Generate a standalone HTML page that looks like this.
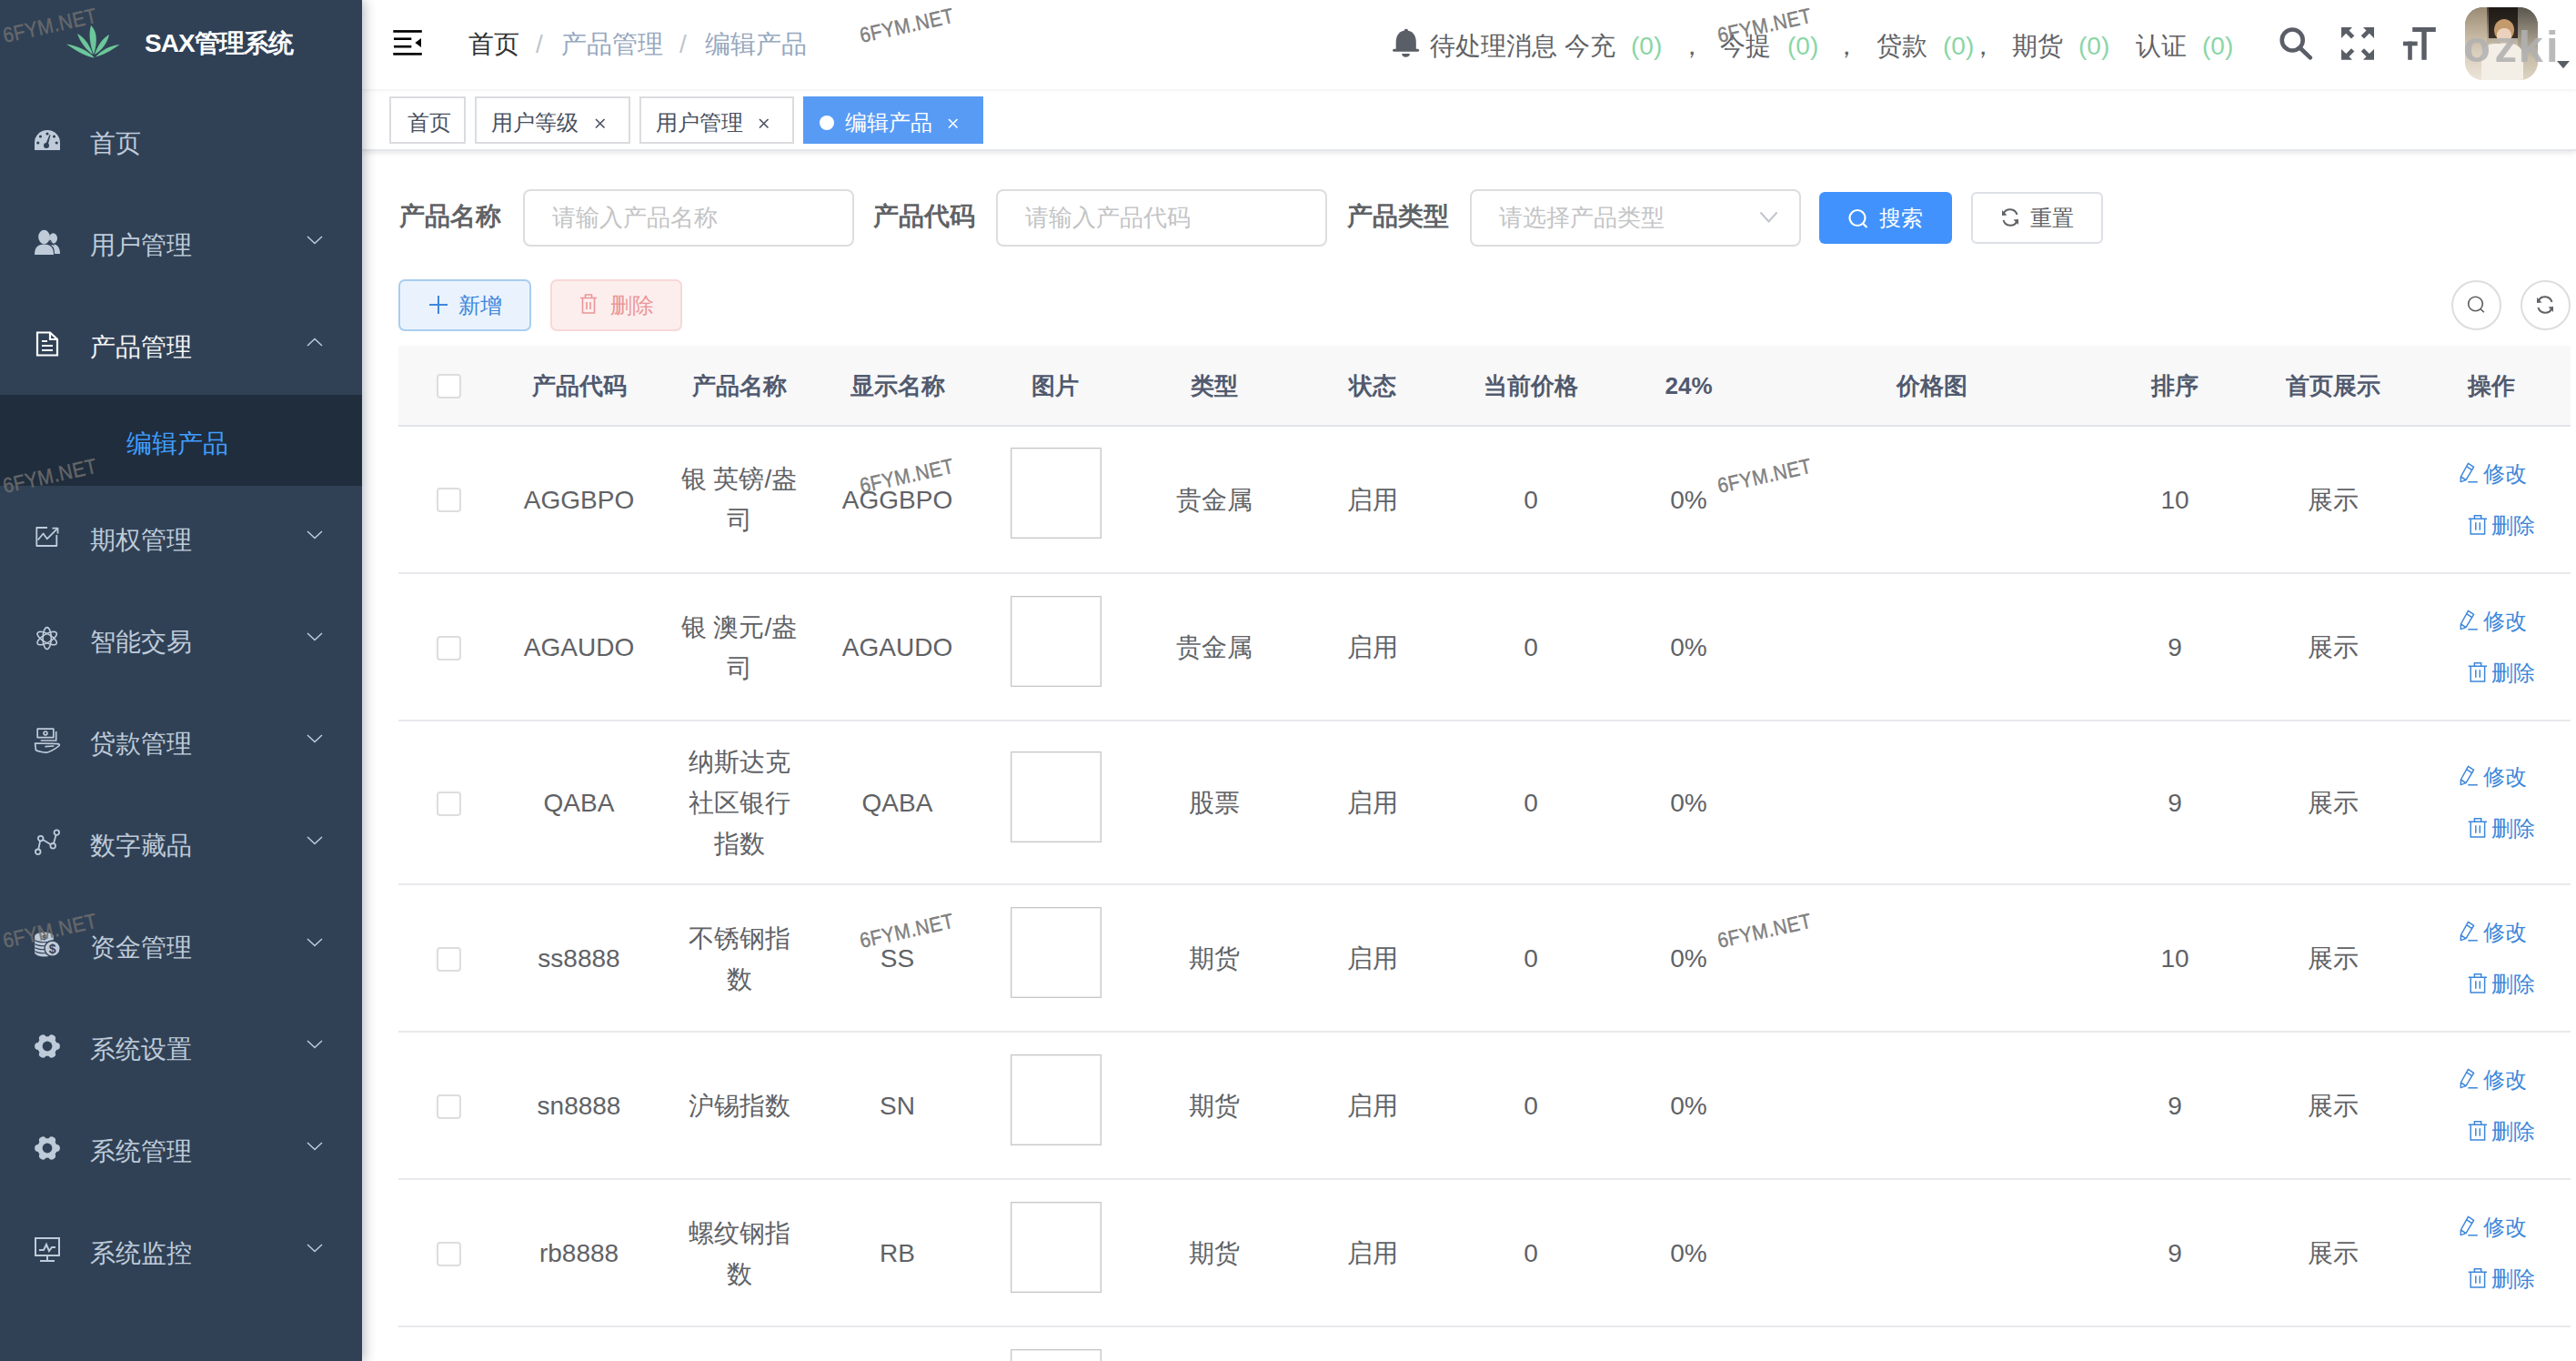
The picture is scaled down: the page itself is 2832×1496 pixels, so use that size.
<!DOCTYPE html><html><head><meta charset="utf-8"><title>SAX</title><style>
*{box-sizing:border-box;margin:0;padding:0}
html,body{width:2832px;height:1496px;overflow:hidden;background:#fff;font-family:"Liberation Sans",sans-serif;position:relative}
.a{position:absolute}
.t{position:absolute;white-space:nowrap;z-index:10}
svg{position:absolute;overflow:visible;z-index:10}
#sb{left:0;top:0;width:398px;height:1496px;background:#304156;box-shadow:3px 0 12px rgba(0,21,41,.28);z-index:5}
.mi{position:absolute;left:0;width:398px;height:112px}
.mt{position:absolute;left:99px;font-size:28px;color:#bfcbd9;line-height:40px;height:40px}
.chev{position:absolute;left:337px;width:18px;height:10px}
#nav{left:398px;top:0;width:2434px;height:98px;background:#fff;box-shadow:0 1px 4px rgba(0,21,41,.08);z-index:3}
#tags{left:398px;top:98px;width:2434px;height:68px;background:#fff;border-bottom:2px solid #e4e6ea;box-shadow:0 2px 6px 0 rgba(0,0,0,.09),0 0 6px 0 rgba(0,0,0,.03);z-index:2}
.tag{position:absolute;top:106px;height:52px;border:2px solid #dadcdf;background:#fff;color:#495060;font-size:24px;line-height:48px;z-index:4}
.lbl{position:absolute;top:218px;font-size:28px;font-weight:bold;color:#606266;line-height:40px}
.inp{position:absolute;top:207.5px;width:364px;height:63px;border:2px solid #dcdddf;border-radius:8px;background:#fff}
.ph{position:absolute;left:30px;top:0;line-height:59px;font-size:26px;color:#c3c4c6;white-space:nowrap}
.th{position:absolute;top:380px;height:88px;line-height:88px;font-size:26px;font-weight:bold;color:#515a6e;text-align:center}
.td{position:absolute;font-size:28px;color:#606266;text-align:center;line-height:45px}
.wm{position:absolute;font-size:23px;color:rgba(110,110,110,.85);-webkit-text-stroke:.5px rgba(110,110,110,.85);white-space:nowrap;transform-origin:0 100%;transform:rotate(-12.5deg) scaleX(.895);line-height:23px;z-index:50;font-weight:normal;letter-spacing:.5px}
</style></head><body>
<div id="sb" class="a">
<svg style="left:60px;top:20px" width="80" height="50" viewBox="60 20 80 50">
<g fill="#6cc79a">
<path d="M73,48.5 C85,50 97,56 104,63.5 C96,63 84,56 73,48.5Z"/>
<path d="M85,37 C93,41 99,50 102,60 C95,55 88,46 85,37Z"/>
<path d="M100,28 C106,33 108,45 103,60 C99,50 97,37 100,28Z"/>
<path d="M120,38 C118,48 111,56 104,60 C107,50 113,42 120,38Z"/>
<path d="M131.5,49 C122,56 112,61 105,62.5 C112,55 121,50 131.5,49Z"/>
</g></svg>
<div class="t" style="left:159px;top:28px;font-size:28px;font-weight:bold;color:#fff;line-height:40px;letter-spacing:-1px">SAX管理系统</div>
<div class="mi" style="top:98px">
</div>
<svg style="left:38px;top:140px" width="28" height="28" viewBox="0 0 28 28"><path fill="#bfcbd9" d="M14,3 A14,14 0 0 1 28,17 L28,25 L0,25 L0,17 A14,14 0 0 1 14,3Z"/><g fill="#304156"><circle cx="14" cy="7" r="1.6"/><circle cx="6.5" cy="10" r="1.6"/><circle cx="21.5" cy="10" r="1.6"/><circle cx="3.8" cy="17" r="1.6"/><circle cx="24.2" cy="17" r="1.6"/><circle cx="13" cy="20" r="3"/><path d="M12,19 L16.5,8 L17.5,8.4 L14.5,20Z"/></g></svg>
<div class="mt" style="top:137.5px;color:#bfcbd9">首页</div>
<div class="mi" style="top:210px">
</div>
<svg style="left:38px;top:252px" width="28" height="28" viewBox="0 0 28 28"><g fill="#bfcbd9"><ellipse cx="20.5" cy="10" rx="4.5" ry="5.8"/><path d="M21,16.5 C26,17 28,21 28,27 L22,27 C22,22 21,19 18,17.5Z"/><ellipse cx="10.5" cy="8.5" rx="6.3" ry="7.8"/><path d="M0,28 C0,20 3.5,16.5 10.5,16.5 C17.5,16.5 21,20 21,28Z"/></g><path d="M17.2,12 C19,16 20,17 21.5,17.5" fill="none" stroke="#304156" stroke-width="1.2"/></svg>
<div class="mt" style="top:249.5px;color:#bfcbd9">用户管理</div>
<svg style="left:337px;top:259px" width="18" height="10" viewBox="0 0 18 10"><path d="M1,1 L9,8.5 L17,1" fill="none" stroke="#bfcbd9" stroke-width="1.5"/></svg>
<div class="mi" style="top:322px">
</div>
<svg style="left:38px;top:364px" width="28" height="28" viewBox="0 0 28 28"><g fill="none" stroke="#fff" stroke-width="2.2"><path d="M3,1.5 L17,1.5 L25,9 L25,26.5 L3,26.5Z"/><path d="M17,1.5 L17,9 L25,9"/><path d="M8,11 L14,11 M8,16 L20,16 M8,21 L20,21"/></g></svg>
<div class="mt" style="top:361.5px;color:#f4f4f5">产品管理</div>
<svg style="left:337px;top:371px" width="18" height="10" viewBox="0 0 18 10"><path d="M1,9 L9,1.5 L17,9" fill="none" stroke="#bfcbd9" stroke-width="1.5"/></svg>
<div class="mi" style="top:534px">
</div>
<svg style="left:38px;top:576px" width="28" height="28" viewBox="0 0 28 28"><g fill="none" stroke="#bfcbd9" stroke-width="1.8" stroke-linejoin="round"><path d="M14,4 L2.3,4 L2.3,24 L24.3,24 L24.3,12"/><path d="M3.7,17.5 L9.6,10.5 L13.7,16.3 L25.5,4.6"/><path d="M19.5,4.6 L25.5,4.6 L25.5,10.6"/></g></svg>
<div class="mt" style="top:573.5px;color:#bfcbd9">期权管理</div>
<svg style="left:337px;top:583px" width="18" height="10" viewBox="0 0 18 10"><path d="M1,1 L9,8.5 L17,1" fill="none" stroke="#bfcbd9" stroke-width="1.5"/></svg>
<div class="mi" style="top:646px">
</div>
<svg style="left:38px;top:688px" width="28" height="28" viewBox="0 0 28 28"><g fill="none" stroke="#bfcbd9" stroke-width="1.6"><ellipse cx="13.7" cy="13.6" rx="12" ry="4.6" transform="rotate(90 13.7 13.6)"/><ellipse cx="13.7" cy="13.6" rx="12" ry="4.6" transform="rotate(30 13.7 13.6)"/><ellipse cx="13.7" cy="13.6" rx="12" ry="4.6" transform="rotate(-30 13.7 13.6)"/></g></svg>
<div class="mt" style="top:685.5px;color:#bfcbd9">智能交易</div>
<svg style="left:337px;top:695px" width="18" height="10" viewBox="0 0 18 10"><path d="M1,1 L9,8.5 L17,1" fill="none" stroke="#bfcbd9" stroke-width="1.5"/></svg>
<div class="mi" style="top:758px">
</div>
<svg style="left:38px;top:800px" width="28" height="28" viewBox="0 0 28 28"><g fill="none" stroke="#bfcbd9" stroke-width="1.7" stroke-linejoin="round"><rect x="3.2" y="1.2" width="17.6" height="9.4"/><circle cx="12" cy="5.9" r="1.9"/><path d="M23.7,4 L23.7,14 L6.7,14"/><path d="M0.6,17 L20.2,17.3 C24,17.3 27.5,17.6 27.3,19 C26.5,21 18,26 14.3,27 C11,27.5 4,26 1.4,24.5Z"/><path d="M11.4,20.6 L21.4,20"/></g></svg>
<div class="mt" style="top:797.5px;color:#bfcbd9">贷款管理</div>
<svg style="left:337px;top:807px" width="18" height="10" viewBox="0 0 18 10"><path d="M1,1 L9,8.5 L17,1" fill="none" stroke="#bfcbd9" stroke-width="1.5"/></svg>
<div class="mi" style="top:870px">
</div>
<svg style="left:38px;top:912px" width="28" height="28" viewBox="0 0 28 28"><g fill="none" stroke="#bfcbd9" stroke-width="1.8"><circle cx="3.75" cy="24.3" r="2.8"/><circle cx="6.7" cy="9.6" r="2.8"/><circle cx="20.2" cy="17.8" r="2.8"/><circle cx="24.3" cy="3.1" r="2.8"/><path d="M4.3,21.5 L6.1,12.4 M9.1,11.1 L17.8,16.3 M21,15.1 L23.5,5.9"/></g></svg>
<div class="mt" style="top:909.5px;color:#bfcbd9">数字藏品</div>
<svg style="left:337px;top:919px" width="18" height="10" viewBox="0 0 18 10"><path d="M1,1 L9,8.5 L17,1" fill="none" stroke="#bfcbd9" stroke-width="1.5"/></svg>
<div class="mi" style="top:982px">
</div>
<svg style="left:38px;top:1024px" width="28" height="28" viewBox="0 0 28 28"><g fill="#bfcbd9"><ellipse cx="10.5" cy="5" rx="10.3" ry="4.2"/><rect x="0.2" y="5" width="20.6" height="18.2"/><ellipse cx="10.5" cy="23.2" rx="10.3" ry="4.2"/></g><g fill="none" stroke="#304156" stroke-width="1.1"><path d="M0.5,9.5 C4,12.5 17,12.5 20.5,9.5 M0.5,13.5 C4,16.5 17,16.5 20.5,13.5 M0.5,17.5 C4,20.5 17,20.5 20.5,17.5 M0.5,21.5 C4,24.5 17,24.5 20.5,21.5"/></g><text x="10.5" y="8.5" font-size="8" font-weight="bold" text-anchor="middle" fill="#304156" font-family="Liberation Sans">$</text><circle cx="19.6" cy="18.6" r="8.6" fill="#bfcbd9" stroke="#304156" stroke-width="1.4"/><text x="19.6" y="23.6" font-size="14" font-weight="bold" text-anchor="middle" fill="#304156" font-family="Liberation Sans">$</text></svg>
<div class="mt" style="top:1021.5px;color:#bfcbd9">资金管理</div>
<svg style="left:337px;top:1031px" width="18" height="10" viewBox="0 0 18 10"><path d="M1,1 L9,8.5 L17,1" fill="none" stroke="#bfcbd9" stroke-width="1.5"/></svg>
<div class="mi" style="top:1094px">
</div>
<svg style="left:38px;top:1136px" width="28" height="28" viewBox="0 0 28 28"><g fill="#bfcbd9"><circle cx="14" cy="14" r="10.8"/><circle cx="14" cy="4.2" r="4.1" transform="rotate(30 14 14)"/><circle cx="14" cy="4.2" r="4.1" transform="rotate(90 14 14)"/><circle cx="14" cy="4.2" r="4.1" transform="rotate(150 14 14)"/><circle cx="14" cy="4.2" r="4.1" transform="rotate(210 14 14)"/><circle cx="14" cy="4.2" r="4.1" transform="rotate(270 14 14)"/><circle cx="14" cy="4.2" r="4.1" transform="rotate(330 14 14)"/></g><circle cx="14" cy="14" r="5.4" fill="#304156"/></svg>
<div class="mt" style="top:1133.5px;color:#bfcbd9">系统设置</div>
<svg style="left:337px;top:1143px" width="18" height="10" viewBox="0 0 18 10"><path d="M1,1 L9,8.5 L17,1" fill="none" stroke="#bfcbd9" stroke-width="1.5"/></svg>
<div class="mi" style="top:1206px">
</div>
<svg style="left:38px;top:1248px" width="28" height="28" viewBox="0 0 28 28"><g fill="#bfcbd9"><circle cx="14" cy="14" r="10.8"/><circle cx="14" cy="4.2" r="4.1" transform="rotate(30 14 14)"/><circle cx="14" cy="4.2" r="4.1" transform="rotate(90 14 14)"/><circle cx="14" cy="4.2" r="4.1" transform="rotate(150 14 14)"/><circle cx="14" cy="4.2" r="4.1" transform="rotate(210 14 14)"/><circle cx="14" cy="4.2" r="4.1" transform="rotate(270 14 14)"/><circle cx="14" cy="4.2" r="4.1" transform="rotate(330 14 14)"/></g><circle cx="14" cy="14" r="5.4" fill="#304156"/></svg>
<div class="mt" style="top:1245.5px;color:#bfcbd9">系统管理</div>
<svg style="left:337px;top:1255px" width="18" height="10" viewBox="0 0 18 10"><path d="M1,1 L9,8.5 L17,1" fill="none" stroke="#bfcbd9" stroke-width="1.5"/></svg>
<div class="mi" style="top:1318px">
</div>
<svg style="left:38px;top:1360px" width="28" height="28" viewBox="0 0 28 28"><g fill="none" stroke="#bfcbd9" stroke-width="2"><rect x="1" y="1" width="26" height="19"/><path d="M14,20 L14,25 M6,26 L22,26 M5,14 L10,14 L13,8 L16,15 L19,11 L23,11"/></g></svg>
<div class="mt" style="top:1357.5px;color:#bfcbd9">系统监控</div>
<svg style="left:337px;top:1367px" width="18" height="10" viewBox="0 0 18 10"><path d="M1,1 L9,8.5 L17,1" fill="none" stroke="#bfcbd9" stroke-width="1.5"/></svg>
<div class="a" style="left:0;top:434px;width:398px;height:100px;background:#1f2d3d"></div>
<div class="mt" style="left:139px;top:467.5px;color:#409eff">编辑产品</div>
</div><div id="nav" class="a"></div>
<svg style="left:420px;top:20px" width="60" height="55" viewBox="420 20 60 55"><g fill="#000">
<rect x="432.3" y="33.1" width="31.5" height="2.7"/><rect x="433" y="41.4" width="19.3" height="2.6"/>
<rect x="433" y="49.9" width="19.3" height="2.6"/><rect x="432.3" y="58" width="31.5" height="2.7"/>
<path d="M456.4,46.9 L463,42 L463,51.9Z"/></g></svg>
<div class="t" style="left:515px;top:28.5px;font-size:28px;line-height:40px;color:#303133">首页</div>
<div class="t" style="left:589px;top:28.5px;font-size:28px;line-height:40px;color:#c0c4cc">/</div>
<div class="t" style="left:617px;top:28.5px;font-size:28px;line-height:40px;color:#97a8be">产品管理</div>
<div class="t" style="left:747px;top:28.5px;font-size:28px;line-height:40px;color:#c0c4cc">/</div>
<div class="t" style="left:775px;top:28.5px;font-size:28px;line-height:40px;color:#97a8be">编辑产品</div>
<svg style="left:1525px;top:25px" width="40" height="45" viewBox="1525 25 40 45"><g fill="#5a5e66">
<circle cx="1545.9" cy="34" r="2.2"/>
<path d="M1534.7,54.5 L1534.7,46 C1534.7,38 1539.5,33.5 1545.8,33.5 C1552,33.5 1556.8,38 1556.8,46 L1556.8,54.5Z"/>
<rect x="1531.1" y="53.8" width="29" height="3" rx="1.5"/>
<path d="M1541.2,59 L1549.9,59 C1549.9,61.5 1548,62.8 1545.5,62.8 C1543,62.8 1541.2,61.5 1541.2,59Z"/></g></svg>
<div class="t" style="left:1572px;top:31px;font-size:28px;line-height:40px;color:#606266;">待处理消息</div>
<div class="t" style="left:1720px;top:31px;font-size:28px;line-height:40px;color:#606266;">今充</div>
<div class="t" style="left:1793px;top:31px;font-size:28px;line-height:40px;color:#8ad6a6;">(0)</div>
<div class="t" style="left:1846px;top:31px;font-size:28px;line-height:40px;color:#606266;">，</div>
<div class="t" style="left:1891px;top:31px;font-size:28px;line-height:40px;color:#606266;">今提</div>
<div class="t" style="left:1965px;top:31px;font-size:28px;line-height:40px;color:#8ad6a6;">(0)</div>
<div class="t" style="left:2016px;top:31px;font-size:28px;line-height:40px;color:#606266;">，</div>
<div class="t" style="left:2063px;top:31px;font-size:28px;line-height:40px;color:#606266;">贷款</div>
<div class="t" style="left:2136px;top:31px;font-size:28px;line-height:40px;color:#8ad6a6;">(0)</div>
<div class="t" style="left:2166px;top:31px;font-size:28px;line-height:40px;color:#606266;">，</div>
<div class="t" style="left:2212px;top:31px;font-size:28px;line-height:40px;color:#606266;">期货</div>
<div class="t" style="left:2285px;top:31px;font-size:28px;line-height:40px;color:#8ad6a6;">(0)</div>
<div class="t" style="left:2348px;top:31px;font-size:28px;line-height:40px;color:#606266;">认证</div>
<div class="t" style="left:2421px;top:31px;font-size:28px;line-height:40px;color:#8ad6a6;">(0)</div>
<svg style="left:2495px;top:20px" width="60" height="55" viewBox="2495 20 60 55"><g fill="none" stroke="#5a5e66" stroke-width="4.6" stroke-linecap="round">
<circle cx="2520.2" cy="44" r="11.5"/><path d="M2528.5,52.5 L2539.8,63.3"/></g></svg>
<svg style="left:2570px;top:26px" width="44" height="44" viewBox="2570 26 44 44"><g fill="#5a5e66">
<path d="M2574,30 L2586,30 L2582.5,33.5 L2588.3,39.3 L2585,42.6 L2579.2,36.8 L2574,42Z"/>
<path d="M2610,30 L2598,30 L2601.5,33.5 L2595.7,39.3 L2599,42.6 L2604.8,36.8 L2610,42Z"/>
<path d="M2574,65.8 L2586,65.8 L2582.5,62.3 L2588.3,56.5 L2585,53.2 L2579.2,59 L2574,54Z"/>
<path d="M2610,65.8 L2598,65.8 L2601.5,62.3 L2595.7,56.5 L2599,53.2 L2604.8,59 L2610,54Z"/>
</g></svg>
<svg style="left:2638px;top:26px" width="44" height="44" viewBox="2638 26 44 44"><g fill="#5a5e66">
<rect x="2642" y="45.6" width="15.7" height="4.7"/><rect x="2647.2" y="45.6" width="4.6" height="20.2"/>
<rect x="2652.2" y="30" width="25.6" height="5"/><rect x="2662.3" y="30" width="5.4" height="35.8"/>
</g></svg>
<div class="a" style="left:2710px;top:8px;width:80px;height:80px;border-radius:20px;overflow:hidden;z-index:4;
background:linear-gradient(180deg,#4a4038 0%,#8a7c6a 25%,#c6baa6 50%,#e6ddd0 70%,#f0eae0 100%)">
<div class="a" style="left:0;top:0;width:24px;height:80px;background:linear-gradient(180deg,#9a8a74 0%,#c0b29c 35%,#d8ccba 60%,#ece4d8 100%)"></div>
<div class="a" style="left:26px;top:0;width:32px;height:34px;background:linear-gradient(180deg,#1e1a16,#3a3028)"></div>
<div class="a" style="left:58px;top:0;width:22px;height:80px;background:linear-gradient(180deg,#5a564e 0%,#9a9282 40%,#c8bea9 70%,#ddd4c2 100%)"></div>
<div class="a" style="left:32px;top:13px;width:22px;height:24px;border-radius:50%;background:#c49a6c"></div>
<div class="a" style="left:35px;top:23px;width:16px;height:17px;border-radius:45%;background:#ecd2bc"></div>
<div class="a" style="left:18px;top:40px;width:46px;height:42px;border-radius:14px 14px 0 0;background:#f3eee6"></div>
</div>
<div class="t" style="left:2708px;top:23.6px;font-size:49px;font-weight:bold;color:rgba(176,176,176,.88);line-height:55px;z-index:6">o</div>
<div class="t" style="left:2742.5px;top:23.6px;font-size:49px;font-weight:bold;color:rgba(176,176,176,.88);line-height:55px;z-index:6">z</div>
<div class="t" style="left:2768.5px;top:23.6px;font-size:49px;font-weight:bold;color:rgba(176,176,176,.88);line-height:55px;z-index:6">k</div>
<div class="t" style="left:2799px;top:23.6px;font-size:49px;font-weight:bold;color:rgba(176,176,176,.88);line-height:55px;z-index:6">i</div>
<svg style="left:2808px;top:64px;z-index:7" width="20" height="14" viewBox="2808 64 20 14"><path d="M2811,67 L2825,67 L2818,75.3Z" fill="#5a5e66"/></svg>
<div id="tags" class="a"></div>
<div class="tag" style="left:428px;width:84px;padding-left:18px;padding-top:3px">首页</div>
<div class="tag" style="left:522px;width:171px;padding-left:16px;padding-top:3px">用户等级</div>
<svg style="left:654px;top:130px" width="12" height="12" viewBox="0 0 12 12"><path d="M1,1 L10.5,10.5 M10.5,1 L1,10.5" stroke="#495060" stroke-width="1.6"/></svg>
<div class="tag" style="left:703px;width:170px;padding-left:16px;padding-top:3px">用户管理</div>
<svg style="left:834px;top:130px" width="12" height="12" viewBox="0 0 12 12"><path d="M1,1 L10.5,10.5 M10.5,1 L1,10.5" stroke="#495060" stroke-width="1.6"/></svg>
<div class="tag" style="left:883px;width:198px;padding-left:44px;padding-top:3px;background:#589bf5;border-color:#589bf5;color:#fff">编辑产品<span class="a" style="left:16px;top:19px;width:16px;height:16px;border-radius:50%;background:#fff"></span></div>
<svg style="left:1041.5px;top:130px" width="12" height="12" viewBox="0 0 12 12"><path d="M1,1 L10.5,10.5 M10.5,1 L1,10.5" stroke="#fff" stroke-width="1.6"/></svg><div class="lbl" style="left:439px">产品名称</div>
<div class="inp" style="left:574.5px"><div class="ph">请输入产品名称</div></div>
<div class="lbl" style="left:960px">产品代码</div>
<div class="inp" style="left:1095px"><div class="ph">请输入产品代码</div></div>
<div class="lbl" style="left:1480.5px">产品类型</div>
<div class="inp" style="left:1616px"><div class="ph">请选择产品类型</div><svg style="left:316px;top:22px" width="22" height="14" viewBox="0 0 22 14"><path d="M1.5,1.5 L10.5,11.5 L19.5,1.5" fill="none" stroke="#c0c4cc" stroke-width="2"/></svg></div>
<div class="a" style="left:2000px;top:211px;width:146px;height:57px;background:#4192fc;border-radius:6px"></div>
<svg style="left:2030px;top:228px" width="26" height="26" viewBox="0 0 26 26"><g fill="none" stroke="#fff" stroke-width="2.2"><circle cx="12" cy="11.5" r="8.5"/><path d="M18,17.5 L22.5,22"/></g></svg>
<div class="t" style="left:2066px;top:219.5px;font-size:24px;line-height:40px;color:#fff">搜索</div>
<div class="a" style="left:2166.5px;top:211px;width:145px;height:57px;background:#fff;border:2px solid #dcdfe6;border-radius:6px"></div>
<svg style="left:2198px;top:227px" width="24" height="24" viewBox="0 0 24 24"><g fill="none" stroke="#606266" stroke-width="2"><path d="M19.5,9 A8,8 0 0 0 4.5,8"/><path d="M4.5,15 A8,8 0 0 0 19.5,16"/></g><g fill="#606266"><path d="M3,4 L3,10 L8.5,9.5Z"/><path d="M21,20 L21,14 L15.5,14.5Z"/></g></svg>
<div class="t" style="left:2232px;top:219.5px;font-size:24px;line-height:40px;color:#606266">重置</div>
<div class="a" style="left:438px;top:306.5px;width:146px;height:57px;background:#eaf3fd;border:2px solid #a9cdf0;border-radius:7px"></div>
<svg style="left:470px;top:323px" width="24" height="24" viewBox="0 0 24 24"><path d="M12,2 L12,22 M2,12 L22,12" stroke="#3f86dc" stroke-width="2"/></svg>
<div class="t" style="left:504px;top:315.5px;font-size:24px;line-height:40px;color:#3f86dc">新增</div>
<div class="a" style="left:604.5px;top:306.5px;width:145px;height:57px;background:#fdeeee;border:2px solid #f8d8d8;border-radius:7px"></div>
<svg style="left:637px;top:323px" width="20" height="22" viewBox="0 0 20 22"><g fill="none" stroke="#ea9696" stroke-width="1.6"><path d="M1,4.5 L19,4.5 M6.5,4.5 L6.5,1 L13.5,1 L13.5,4.5 M3.5,4.5 L3.5,21 L16.5,21 L16.5,4.5 M8,9 L8,17 M12,9 L12,17"/></g></svg>
<div class="t" style="left:670.5px;top:315.5px;font-size:24px;line-height:40px;color:#ea9696">删除</div>
<div class="a" style="left:2695px;top:307.5px;width:55px;height:55px;border:2px solid #dddddd;border-radius:50%"></div>
<svg style="left:2710px;top:323px" width="24" height="24" viewBox="0 0 24 24"><g fill="none" stroke="#5c5c5c" stroke-width="1.6"><circle cx="11.5" cy="11" r="7.8"/><path d="M17.2,16.7 L20.8,20.2"/></g></svg>
<div class="a" style="left:2770.5px;top:307.5px;width:55px;height:55px;border:2px solid #dddddd;border-radius:50%"></div>
<svg style="left:2786px;top:323px" width="24" height="24" viewBox="0 0 24 24"><g fill="none" stroke="#606266" stroke-width="2"><path d="M19.5,9 A8,8 0 0 0 4.5,8"/><path d="M4.5,15 A8,8 0 0 0 19.5,16"/></g><g fill="#606266"><path d="M3,4 L3,10 L8.5,9.5Z"/><path d="M21,20 L21,14 L15.5,14.5Z"/></g></svg>
<div class="a" style="left:438px;top:380px;width:2388px;height:88.5px;background:#f8f8f9;border-bottom:2px solid #e2e4e8"></div>
<div class="a" style="left:479.5px;top:410.5px;width:27px;height:27px;border:2px solid #dddddd;border-radius:4px;background:#fff"></div>
<div class="th" style="left:549.5px;width:174px">产品代码</div>
<div class="th" style="left:725.5px;width:174px">产品名称</div>
<div class="th" style="left:899.5px;width:174px">显示名称</div>
<div class="th" style="left:1073.0px;width:174px">图片</div>
<div class="th" style="left:1248.0px;width:174px">类型</div>
<div class="th" style="left:1421.5px;width:174px">状态</div>
<div class="th" style="left:1596.0px;width:174px">当前价格</div>
<div class="th" style="left:1769.5px;width:174px">24%</div>
<div class="th" style="left:1944.0px;width:360px">价格图</div>
<div class="th" style="left:2304.0px;width:174px">排序</div>
<div class="th" style="left:2478.0px;width:174px">首页展示</div>
<div class="th" style="left:2652.0px;width:174px">操作</div>
<div class="a" style="left:438px;top:629px;width:2388px;height:2px;background:#e8e9ec"></div>
<div class="a" style="left:479.5px;top:536.25px;width:27px;height:27px;border:2px solid #dddddd;border-radius:4px;background:#fff"></div>
<div class="td" style="left:549.5px;width:174px;top:526.75px">AGGBPO</div>
<div class="td" style="left:725.5px;width:174px;top:504.25px">银 英镑/盎<br>司</div>
<div class="td" style="left:899.5px;width:174px;top:526.75px">AGGBPO</div>
<div class="a" style="left:1110.5px;top:492.25px;width:100px;height:100px;border:1px solid #c6c6c6;box-shadow:inset 0 0 0 1px #ececec;background:#fff"></div>
<div class="td" style="left:1248.0px;width:174px;top:526.75px">贵金属</div>
<div class="td" style="left:1421.5px;width:174px;top:526.75px">启用</div>
<div class="td" style="left:1596.0px;width:174px;top:526.75px">0</div>
<div class="td" style="left:1769.5px;width:174px;top:526.75px">0%</div>
<div class="td" style="left:2304.0px;width:174px;top:526.75px">10</div>
<div class="td" style="left:2478.0px;width:174px;top:526.75px">展示</div>
<svg style="left:2700px;top:500.0px" width="30" height="32" viewBox="0 0 30 32"><g fill="none" stroke="#3d87da" stroke-width="1.5" stroke-linejoin="round"><path d="M13.5,9.3 L19.6,13.3 L11,27.6 L5.3,29.6 L5.4,24Z M11.6,12.6 L17.7,16.6 M5.4,24 L11,27.6"/><path d="M13.3,29.8 L23.8,29.8"/></g></svg>
<div class="t" style="left:2730px;top:500.5px;font-size:24px;line-height:40px;color:#3d87da">修改</div>
<svg style="left:2705px;top:560.0px" width="40" height="32" viewBox="0 0 40 32"><g fill="none" stroke="#3d87da" stroke-width="1.5"><path d="M8.7,10.3 L29,10.3 M15.4,10.3 L15.4,6.8 L22.7,6.8 L22.7,10.3 M11.2,10.3 L11.2,27.1 L26.6,27.1 L26.6,10.3 M16.8,14.3 L16.8,22.7 M21.3,14.3 L21.3,22.7"/></g></svg>
<div class="t" style="left:2739px;top:558.0px;font-size:24px;line-height:40px;color:#3d87da">删除</div>
<div class="a" style="left:438px;top:791px;width:2388px;height:2px;background:#e8e9ec"></div>
<div class="a" style="left:479.5px;top:698.5px;width:27px;height:27px;border:2px solid #dddddd;border-radius:4px;background:#fff"></div>
<div class="td" style="left:549.5px;width:174px;top:689.0px">AGAUDO</div>
<div class="td" style="left:725.5px;width:174px;top:666.5px">银 澳元/盎<br>司</div>
<div class="td" style="left:899.5px;width:174px;top:689.0px">AGAUDO</div>
<div class="a" style="left:1110.5px;top:654.5px;width:100px;height:100px;border:1px solid #c6c6c6;box-shadow:inset 0 0 0 1px #ececec;background:#fff"></div>
<div class="td" style="left:1248.0px;width:174px;top:689.0px">贵金属</div>
<div class="td" style="left:1421.5px;width:174px;top:689.0px">启用</div>
<div class="td" style="left:1596.0px;width:174px;top:689.0px">0</div>
<div class="td" style="left:1769.5px;width:174px;top:689.0px">0%</div>
<div class="td" style="left:2304.0px;width:174px;top:689.0px">9</div>
<div class="td" style="left:2478.0px;width:174px;top:689.0px">展示</div>
<svg style="left:2700px;top:662.25px" width="30" height="32" viewBox="0 0 30 32"><g fill="none" stroke="#3d87da" stroke-width="1.5" stroke-linejoin="round"><path d="M13.5,9.3 L19.6,13.3 L11,27.6 L5.3,29.6 L5.4,24Z M11.6,12.6 L17.7,16.6 M5.4,24 L11,27.6"/><path d="M13.3,29.8 L23.8,29.8"/></g></svg>
<div class="t" style="left:2730px;top:662.75px;font-size:24px;line-height:40px;color:#3d87da">修改</div>
<svg style="left:2705px;top:722.25px" width="40" height="32" viewBox="0 0 40 32"><g fill="none" stroke="#3d87da" stroke-width="1.5"><path d="M8.7,10.3 L29,10.3 M15.4,10.3 L15.4,6.8 L22.7,6.8 L22.7,10.3 M11.2,10.3 L11.2,27.1 L26.6,27.1 L26.6,10.3 M16.8,14.3 L16.8,22.7 M21.3,14.3 L21.3,22.7"/></g></svg>
<div class="t" style="left:2739px;top:720.25px;font-size:24px;line-height:40px;color:#3d87da">删除</div>
<div class="a" style="left:438px;top:971px;width:2388px;height:2px;background:#e8e9ec"></div>
<div class="a" style="left:479.5px;top:869.5px;width:27px;height:27px;border:2px solid #dddddd;border-radius:4px;background:#fff"></div>
<div class="td" style="left:549.5px;width:174px;top:860.0px">QABA</div>
<div class="td" style="left:725.5px;width:174px;top:815.0px">纳斯达克<br>社区银行<br>指数</div>
<div class="td" style="left:899.5px;width:174px;top:860.0px">QABA</div>
<div class="a" style="left:1110.5px;top:825.5px;width:100px;height:100px;border:1px solid #c6c6c6;box-shadow:inset 0 0 0 1px #ececec;background:#fff"></div>
<div class="td" style="left:1248.0px;width:174px;top:860.0px">股票</div>
<div class="td" style="left:1421.5px;width:174px;top:860.0px">启用</div>
<div class="td" style="left:1596.0px;width:174px;top:860.0px">0</div>
<div class="td" style="left:1769.5px;width:174px;top:860.0px">0%</div>
<div class="td" style="left:2304.0px;width:174px;top:860.0px">9</div>
<div class="td" style="left:2478.0px;width:174px;top:860.0px">展示</div>
<svg style="left:2700px;top:833.25px" width="30" height="32" viewBox="0 0 30 32"><g fill="none" stroke="#3d87da" stroke-width="1.5" stroke-linejoin="round"><path d="M13.5,9.3 L19.6,13.3 L11,27.6 L5.3,29.6 L5.4,24Z M11.6,12.6 L17.7,16.6 M5.4,24 L11,27.6"/><path d="M13.3,29.8 L23.8,29.8"/></g></svg>
<div class="t" style="left:2730px;top:833.75px;font-size:24px;line-height:40px;color:#3d87da">修改</div>
<svg style="left:2705px;top:893.25px" width="40" height="32" viewBox="0 0 40 32"><g fill="none" stroke="#3d87da" stroke-width="1.5"><path d="M8.7,10.3 L29,10.3 M15.4,10.3 L15.4,6.8 L22.7,6.8 L22.7,10.3 M11.2,10.3 L11.2,27.1 L26.6,27.1 L26.6,10.3 M16.8,14.3 L16.8,22.7 M21.3,14.3 L21.3,22.7"/></g></svg>
<div class="t" style="left:2739px;top:891.25px;font-size:24px;line-height:40px;color:#3d87da">删除</div>
<div class="a" style="left:438px;top:1133px;width:2388px;height:2px;background:#e8e9ec"></div>
<div class="a" style="left:479.5px;top:1040.5px;width:27px;height:27px;border:2px solid #dddddd;border-radius:4px;background:#fff"></div>
<div class="td" style="left:549.5px;width:174px;top:1031.0px">ss8888</div>
<div class="td" style="left:725.5px;width:174px;top:1008.5px">不锈钢指<br>数</div>
<div class="td" style="left:899.5px;width:174px;top:1031.0px">SS</div>
<div class="a" style="left:1110.5px;top:996.5px;width:100px;height:100px;border:1px solid #c6c6c6;box-shadow:inset 0 0 0 1px #ececec;background:#fff"></div>
<div class="td" style="left:1248.0px;width:174px;top:1031.0px">期货</div>
<div class="td" style="left:1421.5px;width:174px;top:1031.0px">启用</div>
<div class="td" style="left:1596.0px;width:174px;top:1031.0px">0</div>
<div class="td" style="left:1769.5px;width:174px;top:1031.0px">0%</div>
<div class="td" style="left:2304.0px;width:174px;top:1031.0px">10</div>
<div class="td" style="left:2478.0px;width:174px;top:1031.0px">展示</div>
<svg style="left:2700px;top:1004.25px" width="30" height="32" viewBox="0 0 30 32"><g fill="none" stroke="#3d87da" stroke-width="1.5" stroke-linejoin="round"><path d="M13.5,9.3 L19.6,13.3 L11,27.6 L5.3,29.6 L5.4,24Z M11.6,12.6 L17.7,16.6 M5.4,24 L11,27.6"/><path d="M13.3,29.8 L23.8,29.8"/></g></svg>
<div class="t" style="left:2730px;top:1004.75px;font-size:24px;line-height:40px;color:#3d87da">修改</div>
<svg style="left:2705px;top:1064.25px" width="40" height="32" viewBox="0 0 40 32"><g fill="none" stroke="#3d87da" stroke-width="1.5"><path d="M8.7,10.3 L29,10.3 M15.4,10.3 L15.4,6.8 L22.7,6.8 L22.7,10.3 M11.2,10.3 L11.2,27.1 L26.6,27.1 L26.6,10.3 M16.8,14.3 L16.8,22.7 M21.3,14.3 L21.3,22.7"/></g></svg>
<div class="t" style="left:2739px;top:1062.25px;font-size:24px;line-height:40px;color:#3d87da">删除</div>
<div class="a" style="left:438px;top:1295px;width:2388px;height:2px;background:#e8e9ec"></div>
<div class="a" style="left:479.5px;top:1202.5px;width:27px;height:27px;border:2px solid #dddddd;border-radius:4px;background:#fff"></div>
<div class="td" style="left:549.5px;width:174px;top:1193.0px">sn8888</div>
<div class="td" style="left:725.5px;width:174px;top:1193.0px">沪锡指数</div>
<div class="td" style="left:899.5px;width:174px;top:1193.0px">SN</div>
<div class="a" style="left:1110.5px;top:1158.5px;width:100px;height:100px;border:1px solid #c6c6c6;box-shadow:inset 0 0 0 1px #ececec;background:#fff"></div>
<div class="td" style="left:1248.0px;width:174px;top:1193.0px">期货</div>
<div class="td" style="left:1421.5px;width:174px;top:1193.0px">启用</div>
<div class="td" style="left:1596.0px;width:174px;top:1193.0px">0</div>
<div class="td" style="left:1769.5px;width:174px;top:1193.0px">0%</div>
<div class="td" style="left:2304.0px;width:174px;top:1193.0px">9</div>
<div class="td" style="left:2478.0px;width:174px;top:1193.0px">展示</div>
<svg style="left:2700px;top:1166.25px" width="30" height="32" viewBox="0 0 30 32"><g fill="none" stroke="#3d87da" stroke-width="1.5" stroke-linejoin="round"><path d="M13.5,9.3 L19.6,13.3 L11,27.6 L5.3,29.6 L5.4,24Z M11.6,12.6 L17.7,16.6 M5.4,24 L11,27.6"/><path d="M13.3,29.8 L23.8,29.8"/></g></svg>
<div class="t" style="left:2730px;top:1166.75px;font-size:24px;line-height:40px;color:#3d87da">修改</div>
<svg style="left:2705px;top:1226.25px" width="40" height="32" viewBox="0 0 40 32"><g fill="none" stroke="#3d87da" stroke-width="1.5"><path d="M8.7,10.3 L29,10.3 M15.4,10.3 L15.4,6.8 L22.7,6.8 L22.7,10.3 M11.2,10.3 L11.2,27.1 L26.6,27.1 L26.6,10.3 M16.8,14.3 L16.8,22.7 M21.3,14.3 L21.3,22.7"/></g></svg>
<div class="t" style="left:2739px;top:1224.25px;font-size:24px;line-height:40px;color:#3d87da">删除</div>
<div class="a" style="left:438px;top:1457px;width:2388px;height:2px;background:#e8e9ec"></div>
<div class="a" style="left:479.5px;top:1364.5px;width:27px;height:27px;border:2px solid #dddddd;border-radius:4px;background:#fff"></div>
<div class="td" style="left:549.5px;width:174px;top:1355.0px">rb8888</div>
<div class="td" style="left:725.5px;width:174px;top:1332.5px">螺纹钢指<br>数</div>
<div class="td" style="left:899.5px;width:174px;top:1355.0px">RB</div>
<div class="a" style="left:1110.5px;top:1320.5px;width:100px;height:100px;border:1px solid #c6c6c6;box-shadow:inset 0 0 0 1px #ececec;background:#fff"></div>
<div class="td" style="left:1248.0px;width:174px;top:1355.0px">期货</div>
<div class="td" style="left:1421.5px;width:174px;top:1355.0px">启用</div>
<div class="td" style="left:1596.0px;width:174px;top:1355.0px">0</div>
<div class="td" style="left:1769.5px;width:174px;top:1355.0px">0%</div>
<div class="td" style="left:2304.0px;width:174px;top:1355.0px">9</div>
<div class="td" style="left:2478.0px;width:174px;top:1355.0px">展示</div>
<svg style="left:2700px;top:1328.25px" width="30" height="32" viewBox="0 0 30 32"><g fill="none" stroke="#3d87da" stroke-width="1.5" stroke-linejoin="round"><path d="M13.5,9.3 L19.6,13.3 L11,27.6 L5.3,29.6 L5.4,24Z M11.6,12.6 L17.7,16.6 M5.4,24 L11,27.6"/><path d="M13.3,29.8 L23.8,29.8"/></g></svg>
<div class="t" style="left:2730px;top:1328.75px;font-size:24px;line-height:40px;color:#3d87da">修改</div>
<svg style="left:2705px;top:1388.25px" width="40" height="32" viewBox="0 0 40 32"><g fill="none" stroke="#3d87da" stroke-width="1.5"><path d="M8.7,10.3 L29,10.3 M15.4,10.3 L15.4,6.8 L22.7,6.8 L22.7,10.3 M11.2,10.3 L11.2,27.1 L26.6,27.1 L26.6,10.3 M16.8,14.3 L16.8,22.7 M21.3,14.3 L21.3,22.7"/></g></svg>
<div class="t" style="left:2739px;top:1386.25px;font-size:24px;line-height:40px;color:#3d87da">删除</div>
<div class="a" style="left:438px;top:1619px;width:2388px;height:2px;background:#e8e9ec"></div>
<div class="a" style="left:479.5px;top:1526.5px;width:27px;height:27px;border:2px solid #dddddd;border-radius:4px;background:#fff"></div>
<div class="td" style="left:549.5px;width:174px;top:1517.0px">hc8888</div>
<div class="td" style="left:725.5px;width:174px;top:1494.5px">热轧卷板<br>指数</div>
<div class="td" style="left:899.5px;width:174px;top:1517.0px">HC</div>
<div class="a" style="left:1110.5px;top:1482.5px;width:100px;height:100px;border:1px solid #c6c6c6;box-shadow:inset 0 0 0 1px #ececec;background:#fff"></div>
<div class="td" style="left:1248.0px;width:174px;top:1517.0px">期货</div>
<div class="td" style="left:1421.5px;width:174px;top:1517.0px">启用</div>
<div class="td" style="left:1596.0px;width:174px;top:1517.0px">0</div>
<div class="td" style="left:1769.5px;width:174px;top:1517.0px">0%</div>
<div class="td" style="left:2304.0px;width:174px;top:1517.0px">9</div>
<div class="td" style="left:2478.0px;width:174px;top:1517.0px">展示</div>
<svg style="left:2700px;top:1490.25px" width="30" height="32" viewBox="0 0 30 32"><g fill="none" stroke="#3d87da" stroke-width="1.5" stroke-linejoin="round"><path d="M13.5,9.3 L19.6,13.3 L11,27.6 L5.3,29.6 L5.4,24Z M11.6,12.6 L17.7,16.6 M5.4,24 L11,27.6"/><path d="M13.3,29.8 L23.8,29.8"/></g></svg>
<div class="t" style="left:2730px;top:1490.75px;font-size:24px;line-height:40px;color:#3d87da">修改</div>
<svg style="left:2705px;top:1550.25px" width="40" height="32" viewBox="0 0 40 32"><g fill="none" stroke="#3d87da" stroke-width="1.5"><path d="M8.7,10.3 L29,10.3 M15.4,10.3 L15.4,6.8 L22.7,6.8 L22.7,10.3 M11.2,10.3 L11.2,27.1 L26.6,27.1 L26.6,10.3 M16.8,14.3 L16.8,22.7 M21.3,14.3 L21.3,22.7"/></g></svg>
<div class="t" style="left:2739px;top:1548.25px;font-size:24px;line-height:40px;color:#3d87da">删除</div>
<div class="wm" style="left:6px;top:27.5px">6FYM.NET</div>
<div class="wm" style="left:6px;top:522.5px">6FYM.NET</div>
<div class="wm" style="left:6px;top:1022.5px">6FYM.NET</div>
<div class="wm" style="left:948px;top:27.5px">6FYM.NET</div>
<div class="wm" style="left:948px;top:522.5px">6FYM.NET</div>
<div class="wm" style="left:948px;top:1022.5px">6FYM.NET</div>
<div class="wm" style="left:1891px;top:27.5px">6FYM.NET</div>
<div class="wm" style="left:1891px;top:522.5px">6FYM.NET</div>
<div class="wm" style="left:1891px;top:1022.5px">6FYM.NET</div>
</body></html>
